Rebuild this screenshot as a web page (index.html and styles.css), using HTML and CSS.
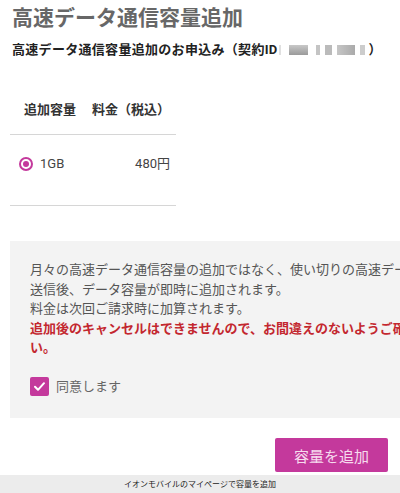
FILE: index.html
```html
<!DOCTYPE html>
<html lang="ja">
<head>
  <meta charset="UTF-8" />
  <title>高速データ通信容量追加</title>
  <meta name="viewport" content="width=device-width, initial-scale=1" />
  <link rel="stylesheet" href="styles.css">
</head>
<body>

  <div class="page">
    <h1>高速データ通信容量追加</h1>
    <h2>高速データ通信容量追加のお申込み（契約ID<span class="masked"><i class="m1"></i><i class="m2"></i><i class="m3"></i><i class="m4"></i><i class="m5"></i><i class="m6"></i></span>）</h2>

    <div class="plan-table">
      <div class="plan-head">
        <span>追加容量</span>
        <span>料金（税込）</span>
      </div>
      <label class="plan-row">
        <span class="radio"></span>
        <span class="plan-size">1GB</span>
        <span class="plan-price">480円</span>
      </label>
    </div>

    <div class="notice">
      <p>月々の高速データ通信容量の追加ではなく、使い切りの高速データです。<br>
      送信後、データ容量が即時に追加されます。<br>
      料金は次回ご請求時に加算されます。</p>
      <p class="warn">追加後のキャンセルはできませんので、お間違えのないようご確認ください。</p>
      <label class="agree">
        <span class="checkbox">
          <svg viewBox="0 0 19 19" width="19" height="19"><path d="M5 9.8l3 3 6-6.6" fill="none" stroke="#fff" stroke-width="2" stroke-linecap="round" stroke-linejoin="round"/></svg>
        </span>
        同意します
      </label>
    </div>

    <div class="actions">
      <button class="btn-add">容量を追加</button>
    </div>
  </div>

  <div class="caption">イオンモバイルのマイページで容量を追加</div>

</body>
</html>
```

FILE: styles.css
```css
html, body {
  margin: 0;
  padding: 0;
  overflow: hidden;
  background: #fff;
  font-family: Roboto, "Noto Sans CJK JP", sans-serif;
  color: #333;
}
.page {
  padding: 3px 12px 0;
}
h1 {
  margin: 0;
  font-size: 21px;
  line-height: 30px;
  color: #676767;
  font-weight: bold;
}
h2 {
  margin: 7px 0 0;
  font-size: 13px;
  letter-spacing: 0.3px;
  line-height: 20px;
  font-weight: bold;
  color: #222;
  white-space: nowrap;
}
.masked {
  display: inline-flex;
  align-items: center;
  width: 90px;
  height: 12px;
  vertical-align: -1px;
  margin-left: 1px;
}
.masked i {
  display: block;
  height: 10px;
  background: #bdbdbd;
}
.masked .m1 { width: 2px; background: #e0e0e0; margin-right: 8px; }
.masked .m2 { width: 19px; background: linear-gradient(#c8c8c8, #9a9a9a); margin-right: 8px; }
.masked .m3 { width: 4px; background: #c4c4c4; margin-right: 5px; }
.masked .m4 { width: 7px; background: #bbb; margin-right: 5px; }
.masked .m5 { width: 18px; background: linear-gradient(90deg, #c6c6c6, #aaa); margin-right: 5px; }
.masked .m6 { width: 5px; background: #ccc; }

.plan-table {
  width: 166px;
  margin: 40px 0 0 -2px;
}
.plan-head {
  display: flex;
  gap: 16px;
  padding: 0 0 14px 14px;
  font-size: 13px;
  line-height: 20px;
  font-weight: bold;
  color: #333;
  white-space: nowrap;
  border-bottom: 1px solid #d6d6d6;
}
.plan-row {
  display: flex;
  align-items: center;
  padding: 21px 6px 33px 9px;
  font-size: 13px;
  line-height: 16px;
  color: #444;
  border-bottom: 1px solid #d6d6d6;
}
.radio {
  width: 10px;
  height: 10px;
  border: 2px solid #c4399c;
  border-radius: 50%;
  position: relative;
  margin-right: 7px;
}
.radio::after {
  content: "";
  position: absolute;
  left: 2px; top: 2px;
  width: 6px; height: 6px;
  border-radius: 50%;
  background: #c4399c;
}
.plan-price {
  margin-left: auto;
}

.notice {
  width: 436px;
  margin: 35px 0 0 -2px;
  padding: 19px 20px 22px;
  background: #f3f3f3;
  font-size: 13px;
  line-height: 19.5px;
  color: #555;
}
.notice p {
  margin: 0;
}
.warn {
  color: #c3272f;
  font-weight: bold;
}
.agree {
  display: flex;
  align-items: center;
  gap: 7px;
  margin-top: 19px;
  color: #666;
}
.checkbox {
  width: 19px;
  height: 19px;
  border-radius: 2px;
  background: #c4399c;
  display: block;
}
.checkbox svg {
  display: block;
}

.actions {
  display: flex;
  justify-content: flex-end;
  padding: 20px 0 3px;
}
.btn-add {
  width: 113px;
  height: 34px;
  border: none;
  border-radius: 2px;
  background: #c4399c;
  color: #f6dcee;
  font-family: "Noto Sans CJK JP", sans-serif;
  font-size: 15px;
  cursor: pointer;
}
.caption {
  height: 19px;
  background: #ececec;
  text-align: center;
  font-size: 8px;
  line-height: 19px;
  color: #222;
}
```
